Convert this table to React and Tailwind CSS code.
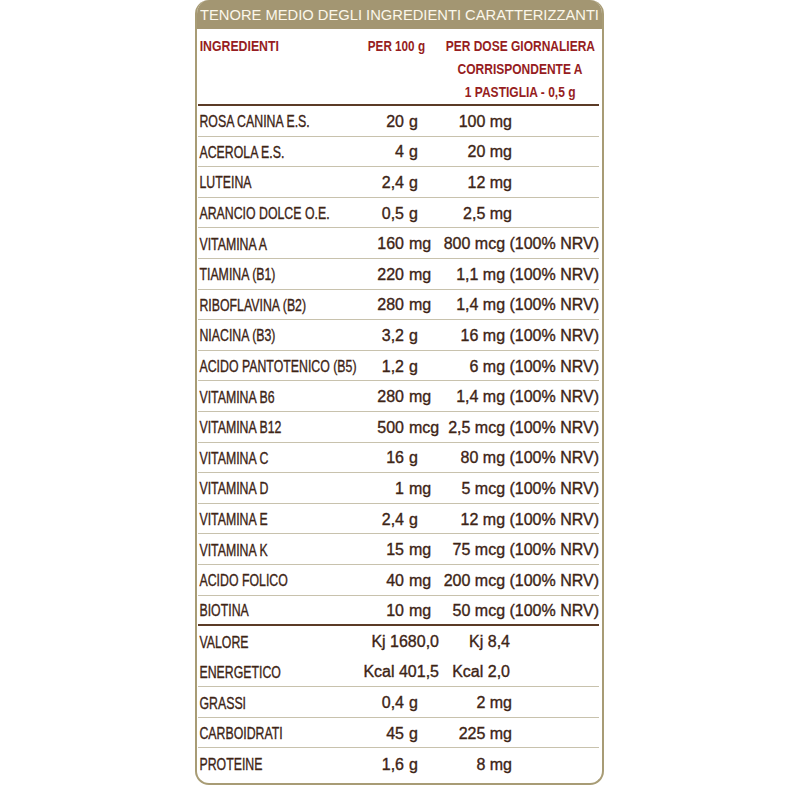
import React from 'react';

const FONT = { fontFamily: "'Liberation Sans', Arial, sans-serif" };

const vitamins = [
  ['ROSA CANINA E.S.', '20', 'g', '100 mg'],
  ['ACEROLA E.S.', '4', 'g', '20 mg'],
  ['LUTEINA', '2,4', 'g', '12 mg'],
  ['ARANCIO DOLCE O.E.', '0,5', 'g', '2,5 mg'],
  ['VITAMINA A', '160', 'mg', '800 mcg (100% NRV)'],
  ['TIAMINA (B1)', '220', 'mg', '1,1 mg (100% NRV)'],
  ['RIBOFLAVINA (B2)', '280', 'mg', '1,4 mg (100% NRV)'],
  ['NIACINA (B3)', '3,2', 'g', '16 mg (100% NRV)'],
  ['ACIDO PANTOTENICO (B5)', '1,2', 'g', '6 mg (100% NRV)'],
  ['VITAMINA B6', '280', 'mg', '1,4 mg (100% NRV)'],
  ['VITAMINA B12', '500', 'mcg', '2,5 mcg (100% NRV)'],
  ['VITAMINA C', '16', 'g', '80 mg (100% NRV)'],
  ['VITAMINA D', '1', 'mg', '5 mcg (100% NRV)'],
  ['VITAMINA E', '2,4', 'g', '12 mg (100% NRV)'],
  ['VITAMINA K', '15', 'mg', '75 mcg (100% NRV)'],
  ['ACIDO FOLICO', '40', 'mg', '200 mcg (100% NRV)'],
  ['BIOTINA', '10', 'mg', '50 mcg (100% NRV)'],
];

const macros = [
  ['GRASSI', '0,4', 'g', '2 mg'],
  ['CARBOIDRATI', '45', 'g', '225 mg'],
  ['PROTEINE', '1,6', 'g', '8 mg'],
];

// condensed caps, like the label's type
function Row({ name, num, unit, dose, full, className }) {
  const nrv = dose.includes('NRV');
  return (
    <div className={`grid grid-cols-[162px_44px_36px_minmax(0,1fr)] items-center h-[30.6px] pt-[2px] text-[16px] leading-none text-[#3d2415] [-webkit-text-stroke:0.35px_currentColor] ${className}`}>
      <span className="pl-[2px] text-[17px] whitespace-nowrap scale-x-[0.725] origin-left">{name}</span>
      {full ? (
        <span className="col-span-2 text-right pr-[1px] whitespace-nowrap">{full}</span>
      ) : (
        <>
          <span className="text-right whitespace-nowrap">{num}</span>
          <span className="pl-[5px] whitespace-nowrap">{unit}</span>
        </>
      )}
      <span className={`text-right whitespace-nowrap ${nrv ? 'pr-0' : 'pr-[87px]'}`}>{dose}</span>
    </div>
  );
}

export default function App() {
  return (
    <div className="w-[800px] h-[800px] bg-white" style={FONT}>
      <div className="ml-[195px] w-[409px] h-[785px] border-2 border-t-0 border-[#a89c75] rounded-[14px] overflow-hidden">
        <div className="h-[29px] bg-[#a39672] flex items-center pl-[3px] pt-[1px] text-[15.5px] text-[#fbf7ea] whitespace-nowrap">
          <span className="scale-x-[0.95] origin-left">TENORE MEDIO DEGLI INGREDIENTI CARATTERIZZANTI</span>
        </div>
        <div className="ml-[1px] mr-[3px]">
          <div className="grid grid-cols-[162px_80px_minmax(0,1fr)] pt-[5px] pb-[1px] border-b-2 border-[#5b3b26] text-[15px] leading-[23px] font-bold text-[#961d22]">
            <span className="pl-[2px] scale-x-[0.82] origin-left">INGREDIENTI</span>
            <span className="pl-[10px] whitespace-nowrap scale-x-[0.78] origin-left">PER 100 g</span>
            <div className="flex flex-col items-center pl-[2px]">
              <span className="whitespace-nowrap scale-x-[0.8]">PER DOSE GIORNALIERA</span>
              <span className="whitespace-nowrap scale-x-[0.8]">CORRISPONDENTE A</span>
              <span className="whitespace-nowrap scale-x-[0.8]">1 PASTIGLIA - 0,5 g</span>
            </div>
          </div>
          {vitamins.map(([name, num, unit, dose], i) => (
            <Row
              key={name}
              name={name}
              num={num}
              unit={unit}
              dose={dose}
              className={i === vitamins.length - 1 ? 'border-b-2 border-[#5b3b26]' : 'border-b border-[#c8c2ad]'}
            />
          ))}
          <Row name="VALORE" full="Kj 1680,0" dose="Kj 8,4" className="pr-[2px]" />
          <Row name="ENERGETICO" full="Kcal 401,5" dose="Kcal 2,0" className="border-b border-[#c8c2ad] pr-[2px]" />
          {macros.map(([name, num, unit, dose], i) => (
            <Row
              key={name}
              name={name}
              num={num}
              unit={unit}
              dose={dose}
              className={i === macros.length - 1 ? '' : 'border-b border-[#c8c2ad]'}
            />
          ))}
        </div>
      </div>
    </div>
  );
}
